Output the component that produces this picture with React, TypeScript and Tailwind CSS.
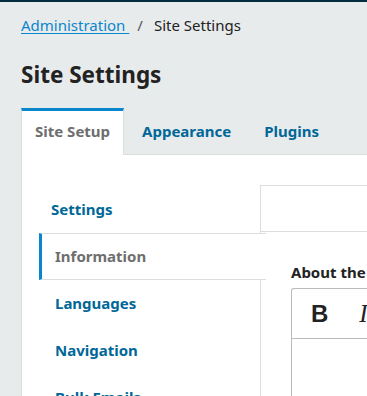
import React from "react";

const navItems = [
  { label: "Settings", active: false, pad: "pl-[12px]" },
  { label: "Information", active: true, pad: "pl-[13px]" },
  { label: "Languages", active: false, pad: "pl-[16px]" },
  { label: "Navigation", active: false, pad: "pl-[16px]" },
  { label: "Bulk Emails", active: false, pad: "pl-[16px]" },
];

const App: React.FC = () => {
  return (
    <div className="h-[396px] overflow-hidden bg-[#e8ebec] font-['Noto_Sans',sans-serif]">
      <div className="h-[2px] bg-[#002c40]" />
      <div className="pl-[21px]">
        {/* breadcrumb */}
        <div className="flex items-center pt-[13px] text-[15px] leading-5">
          <a href="#" className="text-[#0a86cc] underline underline-offset-2">
            Administration&nbsp;
          </a>
          <span className="ml-[8px] mr-[11px] text-[#555]">/</span>
          <span className="text-[#222]">Site Settings</span>
        </div>

        <h1 className="mt-6 text-[22.5px] font-bold leading-8 text-[#222]">Site Settings</h1>

        {/* tabs */}
        <div className="mt-[17px] flex border-b border-[#ddd] text-[15px] font-bold">
          <div className="-mb-px flex h-[47px] items-center border-x border-t-[3px] border-x-[#ddd] border-t-[#0a86cc] bg-white px-[13px] pb-[3px] text-[#6e6e6e]">
            Site Setup
          </div>
          <div className="flex h-[46px] items-center border-t-[3px] border-transparent pb-[3px] pl-[18px] pr-[14px] text-[#006798]">
            Appearance
          </div>
          <div className="flex h-[46px] items-center border-t-[3px] border-transparent pb-[3px] pl-[19px] text-[#006798]">
            Plugins
          </div>
        </div>

        {/* panel */}
        <div className="flex h-[300px] border-l border-[#ddd] bg-white pl-[17px] pt-[30px]">
          <div className="w-[221px] shrink-0 pt-px text-[15px] font-bold">
            {navItems.map((item) => (
              <div
                key={item.label}
                className={
                  item.active
                    ? "relative z-10 -mr-[6px] flex h-[47px] items-center border-y border-l-[3px] border-y-[#ddd] border-l-[#0a86cc] bg-white pl-[13px] text-[#6e6e6e]"
                    : `flex h-[47px] items-center border-y border-transparent ${item.pad} text-[#006798]`
                }
              >
                {item.label}
              </div>
            ))}
          </div>

          <div className="min-w-0 flex-1 border-l border-[#ddd]">
            <div className="h-[47px] border-y border-[#ddd]" />
            <div className="pl-[30px] pt-[30px]">
              <div className="whitespace-nowrap text-[15px] font-bold leading-5 text-[#222]">About the Site</div>
              <div className="mt-[6px] h-[200px] rounded-tl-[3px] border-l border-t border-[#bbb]">
                <div className="flex h-[50px] items-center border-b border-[#bbb] pl-[19px]">
                  <span className="font-['Liberation_Sans',sans-serif] text-[24px] font-bold leading-none text-[#222]">
                    B
                  </span>
                  <span className="ml-[31px] font-['Liberation_Serif',serif] text-[25px] italic leading-none text-[#222]">
                    I
                  </span>
                </div>
              </div>
            </div>
          </div>
        </div>
      </div>
    </div>
  );
};

export default App;
